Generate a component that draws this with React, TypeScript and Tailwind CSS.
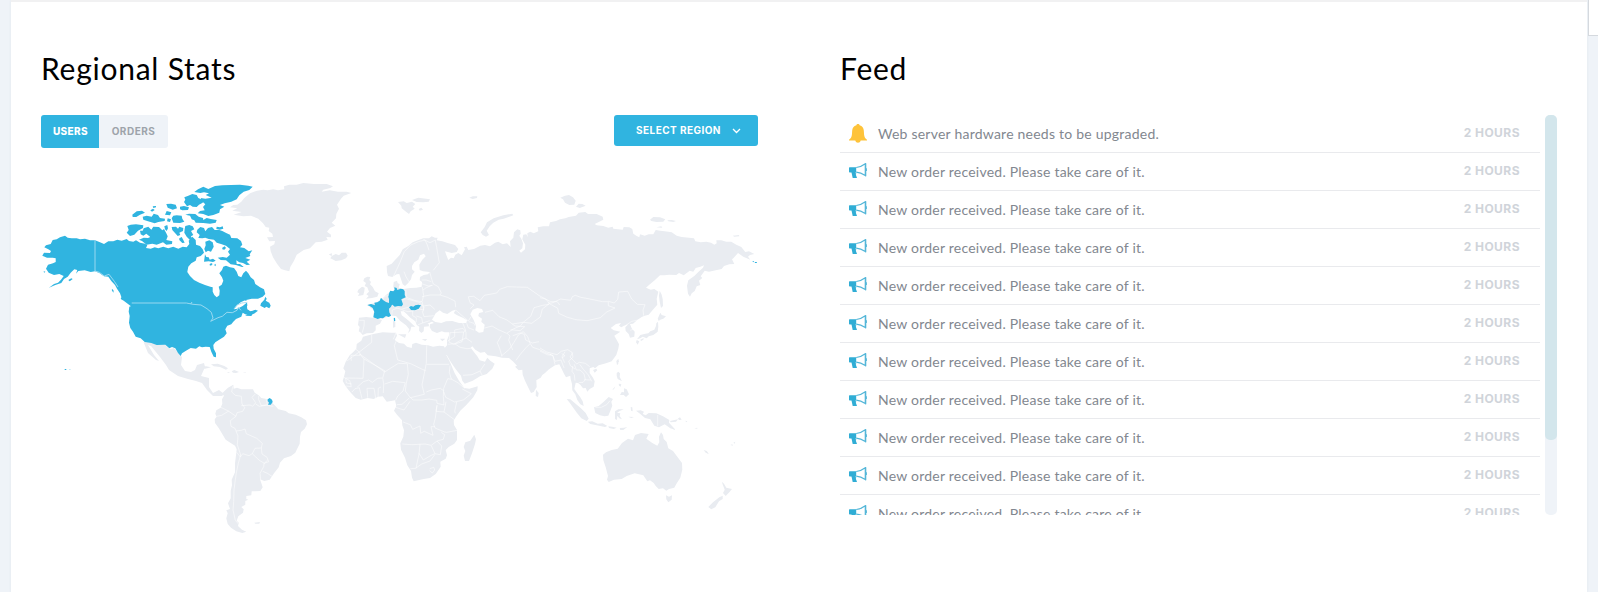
import React from "react";

/* Map sheets: each outline is stored in third-of-a-pixel units, relative to its sheet origin. */
const SHEETS: Record<string, [number, number]> = {
  na: [30, 170],
  gl: [180, 170],
  eu: [340, 180],
  as: [540, 180],
  sa: [200, 360],
  af: [330, 310],
  oc: [540, 340],
};

type Segment = [string, string];

function trace(segments: Segment[], closed: boolean) {
  const pts = segments.flatMap(([sheet, points]) => {
    const [ox, oy] = SHEETS[sheet];
    return points.trim().split(/\s+/).map((p) => {
      const [x, y] = p.split(",").map(Number);
      return `${(ox + x / 3).toFixed(1)} ${(oy + y / 3).toFixed(1)}`;
    });
  });
  return `M${pts.join("L")}${closed ? "Z" : ""}`;
}

const shapes = (sheet: string, list: string[]) => list.map((p) => trace([[sheet, p]], true)).join("");
const lines = (sheet: string, list: string[]) => list.map((p) => trace([[sheet, p]], false)).join("");

const northAmerica = shapes("na", [
  "62,222 68,210 80,208 90,202 105,197 113,203 125,205 140,205 150,208 165,206 180,211 195,211 210,217 222,222 235,214 250,214 262,209 275,212 290,207 297,213 310,215 318,211 330,218 345,221 352,226 348,234 362,236 374,232 385,235 400,230 415,235 430,230 445,236 458,230 470,232 478,222 476,212 487,200 497,210 498,224 510,228 518,238 522,248 512,258 500,262 497,272 484,280 475,290 472,306 480,318 492,330 508,338 525,345 541,350 548,352 548,365 553,375 560,382 568,376 569,362 566,350 575,344 580,332 576,322 568,310 576,300 580,290 588,287 600,292 612,294 620,305 625,318 634,322 640,310 648,302 655,310 662,322 672,330 676,342 690,352 702,358 706,372 698,380 684,386 665,386 645,391 632,397 622,405 612,418 622,416 638,408 650,398 658,401 651,409 652,418 662,424 676,419 684,422 672,431 655,436 646,433 638,428 634,440 618,447 610,455 604,463 592,467 586,478 590,490 582,500 570,508 556,517 550,525 551,536 558,550 558,562 551,560 544,545 539,531 527,530 516,532 508,529 498,536 482,534 468,542 456,550 452,558 444,549 436,535 426,531 418,535 406,524 380,525 364,519 344,516 332,505 317,500 309,485 301,474 297,458 299,438 296,425 298,410 304,408 300,401 285,393 275,384 270,370 261,356 255,345 244,333 235,320 222,319 208,309 195,304 182,306 164,301 145,303 138,311 142,300 133,298 122,308 113,320 102,327 94,339 76,345 57,353 72,342 84,338 93,329 101,318 88,312 72,315 56,308 48,296 54,284 69,280 77,276 77,265 68,263 51,263 37,257 42,248 60,249 63,243 55,238 43,232 48,226",
  "115,330 124,325 128,327 119,334", "40,305 46,304 44,308", "245,360 250,368 251,362 247,357", "274,382 284,388 298,392 306,402 306,411 294,402 281,392 272,387",
  "693,400 703,389 706,380 710,386 707,392 718,398 722,407 718,415 709,410 704,414 691,407", "645,437 657,432 670,430 664,438", "644,390 652,391 647,393",
  "104,597 109,597 109,600 104,600", "117,599 122,599 122,600 117,600",
  "520,50 535,57 555,48 577,46 603,45 630,44 655,47 668,50 658,60 641,65 628,76 620,88 604,95 584,100 570,105 583,110 570,118 568,128 550,135 535,138 520,132 503,130 510,123 524,121 519,111 526,103 516,94 512,84 526,86 545,83 527,75 537,70 522,67 511,69 493,66 504,58",
  "475,77 487,72 500,75 505,84 520,91 518,98 507,104 500,111 488,110 480,105 471,109 462,96 466,89 463,82",
  "520,150 530,144 542,147 560,150 557,158 540,161 520,159 497,158 493,151 485,148 480,137 466,134 477,131 496,132 506,140 519,144",
  "450,110 462,108 477,112 474,120 457,121 450,118", "409,102 423,101 437,104 441,115 428,119 413,113", "440,136 455,137 457,146 463,155 450,159 430,158 425,145 430,137", "410,123 424,127 420,136 405,134", "413,145 423,148 420,156 411,154",
  "338,140 350,137 365,140 371,131 384,135 390,144 405,146 404,153 385,156 374,160 354,154 340,149", "307,134 320,124 336,122 345,128 330,134 319,141 308,141", "361,121 369,116 374,120 366,125", "368,109 378,108 378,112 370,114",
  "292,168 302,164 318,163 329,164 340,166 339,174 324,182 313,194 300,198 290,188 296,180",
  "330,182 338,182 341,175 355,170 364,179 370,170 387,171 397,181 402,177 409,190 413,199 409,210 427,214 426,222 409,224 399,217 380,224 367,221 350,224 336,213 327,209 341,203 354,204 361,201 349,191 340,197 332,193",
  "425,171 438,170 444,176 448,170 460,174 459,183 448,188 451,195 443,198 435,189 427,180", "403,169 412,165 414,175 410,183 405,178", "466,168 478,165 488,169 493,178 483,183 490,195 483,199 486,207 479,209 470,200 463,188 464,177", "448,205 455,201 460,210 464,218 457,219 448,210",
  "502,179 511,171 522,174 526,184 534,174 546,171 554,180 568,180 577,183 590,190 600,194 604,204 622,205 633,213 637,224 630,232 643,234 656,244 667,241 659,253 661,258 646,264 661,269 650,275 660,284 650,285 639,279 628,277 619,271 620,282 630,282 641,291 636,291 618,285 602,283 588,271 572,270 563,263 578,261 590,263 600,254 594,245 600,237 588,227 573,222 560,218 552,209 536,207 526,203 517,205 505,204 509,195 500,187",
  "560,170 570,172 578,169 580,176 569,179 559,177", "526,215 538,211 548,217 551,230 543,245 534,242 527,247 523,237 527,226", "577,233 584,229 588,234 583,239 577,238", "525,253 529,261 536,262 539,269 549,266 557,272 549,276 536,274 522,275", "538,285 543,279 548,282 543,287", "552,285 557,281 557,289",
]);

const highlighted = shapes("eu", [
  "103,368 112,367 119,362 123,353 129,360 138,366 147,369 157,372 153,380 147,386 148,397 153,407 146,411 138,408 129,415 122,414 113,417 100,412 103,396 98,384 89,378 82,375 93,372 105,376",
  "148,338 151,332 160,334 164,329 163,322 170,324 172,330 182,326 190,328 194,334 194,345 197,352 184,358 187,367 189,373 185,379 174,378 164,380 158,375 147,369 147,357 145,350",
  "207,382 213,378 220,380 226,376 235,374 243,376 236,386 225,391 213,390", "161,415 165,413 166,423 162,424",
]) + shapes("sa", ["203,118 209,114 216,119 218,126 212,134 204,134 207,128 203,123"]) + shapes("as", ["637,244 643,243 640,247", "644,246 651,246 650,249 645,249"]);

const eurasia = trace([
  ["eu", "140,258 155,251 165,240 179,225 188,208 205,198 218,187 235,180 250,175 267,175 275,169 285,173 293,173 290,181 307,184 323,189 345,195 355,207 350,216 335,219 315,214 319,225 325,240 333,233 341,235 346,224 355,219 365,226 375,208 372,202 380,200 385,210 402,207 421,197 435,195 450,199 465,188 475,185 488,193 501,190 512,201 510,184 520,173 522,157 532,148 541,151 542,161 538,167 544,176 549,190 547,205 538,212 543,218 555,208 556,194 547,178 550,164 559,163 563,171 562,160 571,155 581,160 595,154 593,142 610,139 627,139 630,127 648,123 660,118"],
  ["as", "76,115 86,111 108,107 116,98 136,96 144,102 170,102 188,110 190,119 178,125 164,132 170,136 190,138 205,143 218,140 220,146 248,149 251,141 268,142 277,147 280,161 290,168 298,172 300,163 314,167 326,163 340,163 347,150 361,152 374,154 395,157 410,167 425,171 462,175 466,184 482,187 499,185 513,188 523,194 530,190 529,181 544,181 559,185 574,185 589,194 604,201 616,216 627,214 643,222 630,225 624,230 631,239 610,230 594,219 588,226 580,235 576,238 583,252 568,253 552,258 545,267 527,271 507,275 494,272 482,289 487,294 477,302 481,315 470,319 464,333 455,340 450,350 444,341 441,317 445,301 463,288 475,276 489,263 492,256 481,260 467,264 460,275 449,272 431,286 417,279 409,285 388,284 373,286 360,286 344,301 327,315 318,323 332,329 343,327 355,335 350,356 352,374 338,390 326,404 314,407 305,411 292,420 279,431 270,432 275,445 284,455 283,470 270,473 266,462 257,453 256,442 265,433 252,437 244,442 237,437 243,429 228,432 212,444 221,451 241,455 223,467 232,483 237,493 235,506 229,525 215,544 198,550 176,556 165,565"],
  ["oc", "160,81 149,85 149,99 159,113 164,124 161,140 149,147 142,155 137,144 129,145 121,134 114,129 107,128 103,147 112,160 121,172 128,184 131,198 121,193 112,180 106,163 97,151 96,132 92,118 91,107 78,112 72,101 65,87 58,73 45,76"],
  ["af", "657,178 645,189 637,195 632,203 619,211 620,231 611,246 603,249 594,231 585,212 578,194 577,179 566,181 555,170 561,167 550,155 537,144 516,143 497,139 473,136 464,126 451,128 436,119 427,109 422,113 434,129 442,139 449,151 465,155 472,143 481,152 494,161 487,176 470,192 450,199 428,212 404,221 397,212 393,197 379,180 369,166 359,151 346,127 342,116 351,106 351,91 357,76 358,67 344,67 335,64 321,69 306,63 299,52 300,43 311,36"],
  ["eu", "275,430 266,432 267,439 252,440 251,454 244,459 237,452 238,440 230,435 226,424 211,413 200,402 191,394 182,394 185,406 199,416 207,423 219,434 226,440 214,440 211,452 204,460 208,448 198,436 180,422 168,408 153,407 126,416 102,412 100,400 104,393 82,375 103,369 120,362 135,347 149,336 164,331 160,320 161,306 171,302 173,310 179,312 176,323 190,327 211,324 229,323 245,320 246,306 239,301 240,291 251,285 264,283 269,276 249,274 239,270 238,254 247,239 257,229 252,221 240,226 235,239 223,247 216,258 216,268 224,275 216,285 213,298 204,310 195,318 188,313 184,300 178,282 170,283 157,291 144,288 141,276"],
], true);

const land =
  eurasia +
  shapes("gl", ["150,112 160,105 172,104 184,95 193,84 210,70 231,62 250,59 263,61 280,58 294,61 313,58 312,49 328,44 350,44 370,39 402,42 440,42 459,49 451,54 430,59 425,65 449,61 474,65 500,65 514,69 491,77 483,86 471,104 477,116 469,132 468,145 455,158 466,167 450,174 441,185 453,194 453,202 439,201 443,209 425,215 407,217 390,235 371,240 350,254 342,272 331,291 328,304 315,301 303,297 291,281 279,262 272,244 270,230 283,223 285,213 268,214 261,202 279,201 277,191 266,183 268,173 257,171 249,160 235,146 213,137 190,139 161,134 185,126 157,122 172,115", "446,253 456,250 455,258 467,252 477,256 485,248 498,248 503,257 498,265 484,271 467,273 456,267 451,265 455,259"]) +
  shapes("eu", ["57,413 79,411 104,414 126,420 120,431 107,437 107,451 99,459 80,460 68,465 61,457 56,454 59,441 54,435", "73,295 82,290 91,291 88,300 93,306 90,313 98,321 105,334 116,340 112,350 96,354 78,356 86,348 79,343 87,335 82,322 74,318 78,309 70,303", "55,329 66,320 74,323 73,334 70,345 54,348 58,340 52,337", "174,66 191,64 200,69 216,65 226,72 218,80 224,86 212,94 207,102 198,95 185,85 184,77", "216,60 235,53 270,58 266,65 250,67 230,66", "236,87 244,83 249,89 239,92", "388,53 398,49 412,49 411,54 398,57", "422,157 434,141 441,127 461,115 490,106 517,101 520,106 491,116 476,119 460,128 449,139 440,152 447,165 438,170 428,165", "174,463 199,463 195,474", "159,423 166,426 166,441 159,443", "245,478 262,477 256,483", "300,476 316,476 307,484"]) +
  shapes("as", ["61,53 75,47 87,45 99,52 107,62 103,74 88,75 75,68 69,58", "108,80 116,71 127,72 137,77 119,84", "330,119 340,111 360,112 376,118 370,125 349,126 334,123", "382,121 395,120 408,123 400,126 385,124", "349,142 364,139 367,143", "578,167 597,165 598,169 583,170", "359,332 365,344 368,358 369,378 363,384 359,365 357,347", "353,416 361,398 365,405 378,409 370,416 361,419 356,423", "354,425 355,440 353,455 340,465 326,469 320,475 308,470 301,475 291,478 301,465 316,461 325,460 331,454 343,449 348,438 349,430", "290,480 298,484 293,494 288,487", "301,479 311,474 310,479 303,483", "229,543 235,537 235,551 231,556"]) +
  shapes("af", ["99,80 116,76 134,71 158,67 185,68 198,68 201,77 194,90 207,99 222,101 231,110 245,114 247,102 258,98 275,104 294,106 309,110 328,107 342,109 350,125 349,135 361,158 374,190 387,212 403,234 418,236 443,229 442,241 430,262 409,285 391,302 378,320 371,332 372,345 381,360 381,390 373,401 356,411 347,420 351,436 347,446 331,455 332,470 317,492 300,504 281,507 251,514 246,503 243,483 232,466 225,443 213,419 211,400 220,380 222,361 217,346 216,331 201,314 192,302 199,288 195,271 183,273 170,275 158,259 144,260 131,267 113,264 92,269 77,264 65,251 55,239 47,229 38,213 42,200 46,184 40,175 47,155 59,136 70,126 79,116 80,102 94,92", "433,374 438,388 435,402 426,430 417,453 405,453 401,437 406,423 401,411 406,397 421,392", "618,239 626,249 624,261 617,258"]) +
  shapes("sa", ["65,101 76,91 84,83 100,74 101,86 111,83 124,88 145,88 159,88 164,98 176,106 184,114 200,117 210,120 218,130 227,139 235,148 257,153 266,160 287,164 304,172 318,181 321,193 314,206 303,216 300,230 299,251 290,269 286,278 273,288 252,295 240,308 236,322 222,340 209,359 193,363 180,358 184,369 188,382 181,393 165,394 155,394 154,406 139,408 139,417 145,419 136,423 136,434 124,441 131,448 129,458 115,469 110,482 117,489 114,498 126,509 139,515 127,519 109,514 93,503 83,492 79,475 83,460 79,451 90,447 84,430 92,415 92,392 96,376 95,359 105,337 105,310 107,293 110,268 105,257 91,248 77,239 69,226 56,204 45,189 44,178 50,170 46,161 49,151 62,143 67,131 66,118 72,107", "163,488 180,486 178,491 166,491", "33,13 53,11 73,18 84,25 78,29 60,21 41,19", "0,21 18,19 33,22 15,26", "95,34 103,30 117,36 108,39 99,38", "80,36 90,37 86,39", "128,37 137,37 137,39"]) +
  "M143.5 342 L154 343 L159 345 L165 345 L170 349 L174 348 L180 355 L182 357 L181 365 L185 371 L191 372 L195 370 L197 365 L204 363 L205 367 L201 376 L209 378 L209 387 L213 393 L219 390 L224 394 L222 396 L213 396 L207 390 L202 383 L196 381 L188 379 L178 376 L169 370 L166 365 L160 357 L151 346 L148 345 L154 355 L159 361 L156 360 L148 353 Z" +
  shapes("oc", ["80,177 91,178 105,190 122,204 137,219 146,236 140,243 124,235 111,219 98,201 89,188", "143,245 157,244 173,251 188,250 202,258 195,261 170,256 151,252", "205,259 216,260 230,263 221,267 207,264", "239,264 252,263 262,261 250,270 241,270", "162,202 176,198 191,185 206,171 219,177 214,185 217,197 211,213 205,227 193,229 180,226 166,219", "225,214 235,208 251,208 238,214 231,218 241,220 239,228 246,238 238,235 232,227 231,240 225,237 225,223", "230,99 235,95 240,100 239,111 246,124 233,117 230,108", "252,145 260,148 267,163 258,171 251,165 240,165 245,156 252,157", "236,131 244,132 242,140 237,137", "217,149 226,139 222,148", "159,90 169,86 172,91 164,98", "229,64 235,56 237,65 232,71", "272,201 277,202 278,214 273,212", "288,212 302,211 312,215 308,222 317,226 326,219 349,220 369,229 388,240 387,248 407,270 391,265 374,253 357,262 343,257 331,238 315,234 300,221", "390,243 414,238 408,245 392,247", "413,236 420,232 425,239 418,240", "265,230 282,231 274,234",
    "189,344 198,337 215,330 233,326 246,309 264,296 279,301 285,285 303,279 326,282 319,296 337,309 352,317 358,307 357,290 363,277 369,285 371,297 380,306 385,325 399,333 412,350 426,369 427,389 421,413 409,432 403,443 387,447 379,452 369,445 356,447 347,438 341,429 330,421 322,424 310,406 284,400 260,408 245,417 222,419 206,426 201,419 204,408 197,382 190,360", "378,466 387,470 396,466 395,479 385,487 379,478", "545,425 552,431 559,443 576,447 568,457 557,468 549,459 554,449", "548,467 548,477 537,484 526,502 514,508 505,501 519,487 538,472", "491,330 500,333 507,342 497,338", "571,315 577,313 579,317", "580,308 586,305 584,311", "435,242 442,244 440,247", "463,265 472,263 472,266"]);

const water = shapes("eu", [
  "276,419 287,400 299,391 309,398 322,402 337,392 348,389 341,399 350,405 370,414 381,421 379,429 357,429 337,423 318,424 304,429 286,426",
  "391,403 398,389 412,384 426,387 430,396 417,399 415,408 426,416 424,425 434,434 430,456 417,458 406,451 408,438 401,420", "262,431 276,425 282,429 270,433",
]);

const borders =
  lines("eu", [
    "160,290 172,265 180,247 193,215 212,195 235,185 255,180 262,195 267,211", "250,178 270,188 286,180 290,203 298,248 280,271", "210,310 198,290 192,275", "269,276 275,298 280,312 295,320 304,339 300,345 322,352 345,363 347,382",
    "245,300 259,300 274,305", "245,311 265,318 278,316", "249,330 259,323 275,316", "197,330 199,352 223,361 246,365 251,347 247,321", "246,350 270,345 300,345", "246,365 250,378 270,375 284,388", "187,360 198,356 223,363 242,368", "167,383 184,388 207,381", "155,408 157,390 170,385", "187,390 204,395 218,393 238,387 251,390 249,378", "218,393 218,407 229,413 229,427", "229,408 245,413 248,429 234,434", "247,394 252,410 281,407", "248,429 269,422", "242,370 252,382 249,395", "148,369 158,375 164,380", "127,361 134,349 149,346", "58,421 73,421 72,438 67,458",
    "348,391 370,410 385,423 393,410", "387,425 402,430 405,437", "380,430 385,443 402,450", "368,429 377,451 371,456 330,458", "330,458 327,486 341,493 366,485 371,456", "385,350 401,349 420,362 433,346 470,339 479,328 502,320 529,321 562,322 598,347 632,365 652,365 659,375",
    "385,350 390,368 402,375 391,386", "435,397 458,391 477,410 501,420 517,432 550,427 572,409 582,383 608,376 628,373", "431,445 456,438 475,449 500,460 520,447 541,438 550,427", "517,432 525,438 554,440 540,452 512,449", "550,427 575,430 601,411 607,387 628,371", "501,460 510,468 506,480 518,510", "518,467 541,459 553,463 557,480 577,489 597,485",
  ]) +
  lines("as", ["0,353 17,357 30,372 53,385 56,400 82,412 108,419 141,422 181,413 200,396 225,384 205,377 205,365 188,365 145,356 122,352 106,346 97,350 92,361 62,357 36,369 23,369", "205,364 223,369 233,358 236,336 263,334 275,357 292,373 315,374 309,390 311,407", "271,451 281,447", "256,437 275,424 296,420", "0,504 20,516 51,524 64,514 83,509 96,517 99,532 86,543 91,557 105,567", "0,513 22,524 38,526 45,544 63,540 72,564", "65,521 75,527 66,534"]) +
  lines("af", ["200,90 193,107 199,133 203,150 242,161 277,178 287,182", "198,68 190,88", "125,75 125,97 89,125 50,153", "89,132 102,147 99,205 47,204 49,219 65,222", "89,132 164,186 205,160 232,161 235,193 229,220 226,243 241,263 283,253 276,225 289,160 290,106", "290,163 357,163", "360,167 358,187 364,207 385,219 404,235", "102,147 164,182 158,204 161,222 160,249", "78,118 90,128 90,136 63,136 64,152", "164,222 188,214 226,218 219,243 203,258 197,271", "241,262 249,270 275,270 297,267 320,271 321,280 342,285 340,259 341,235 353,206 365,208", "289,246 304,240 331,235 341,242", "341,245 347,262 374,276 400,270 424,251 397,237", "380,276 374,303 376,310", "348,275 342,306 376,331", "318,304 342,306", "318,304 321,286 316,324 311,343 315,354 344,366 350,367 382,361", "200,284 216,283 238,264", "196,292 222,300 230,289 240,274", "219,336 241,344 248,358 270,348 272,370 283,364 309,376 303,350 315,350", "217,402 245,404 285,402 304,406 321,393 340,388 344,374 334,367", "270,402 267,432 258,475 241,476", "267,430 280,450 304,436 315,431 304,407", "315,431 331,434 335,408 321,393", "258,474 275,462 300,453 314,434", "299,476 311,472 314,480 307,489 299,482", "353,103 374,101 390,92 408,84 426,97", "374,101 390,112 411,116 423,115", "399,196 426,194 450,183 457,197", "451,182 464,162", "408,84 408,66 399,55 374,60 374,80 353,93", "516,139 509,116 502,98 514,77", "514,138 538,118 552,97 565,75 580,65 593,80 600,100 608,112 629,119 650,130 664,134", "558,151 571,133 588,113 600,101", "660,133 669,137 675,164", "42,202 59,212 64,230 47,228", "66,246 75,236 88,233 96,266", "82,231 100,215 116,210 127,217 143,205 156,204", "113,263 111,235 132,235 137,265", "144,261 145,235 153,231"]) +
  lines("sa", ["98,79 95,96 106,106 124,109 126,132 134,143 128,154 111,158 108,169 91,182 93,199 105,205 108,213 124,211 135,207 139,221 170,235 187,250 184,264 165,265 157,281 147,287 128,281 121,291 110,277", "124,137 150,135 158,139 167,128 156,112 166,102", "167,132 178,139 199,136 220,139", "176,107 176,119 184,137 202,134 198,116", "62,142 85,153 108,169", "50,169 65,166 86,153", "108,213 114,228 112,254 122,285 115,310 109,339 106,360 102,390 101,425 99,450 106,481 121,498", "184,263 186,282 201,292 206,305 192,310 191,320 180,340 182,359", "157,281 178,301 193,310 203,300", "188,334 202,340 216,349"]) +
  lines("oc", ["353,225 353,258", "75,35 66,51 74,68", "98,38 90,51 100,61 110,72 118,67 136,70 149,80", "103,73 109,90 120,90 132,101 136,119 129,127 116,128", "132,119 152,120", "119,73 130,88 145,105 155,124", "98,78 96,94 103,104 105,122", "166,202 184,202 200,194 210,182"]);

const usBorders = lines("na", ["195,211 195,303 208,307 223,318 237,313 253,334 264,351", "305,399 469,399 489,403 513,405 531,416 544,427 549,444 542,454 564,443 577,439 591,427 607,428 621,421 625,412 633,421", "482,402 486,396", "612,417 620,406 635,399 653,397"]);

function WorldMap() {
  return (
    <svg className="mt-[22px] block h-[370px] w-[740px] shrink-0 -ml-[11px]" viewBox="30 170 740 370" role="img" aria-label="Users by country">
      <path d={land} fill="#e9ecf1" />
      <path d={borders} fill="none" stroke="#ffffff" strokeOpacity=".8" strokeWidth=".65" strokeLinejoin="round" />
      <path d={water} fill="#ffffff" />
      <path d={northAmerica + highlighted} fill="#30b4e0" />
      <path d={usBorders} fill="none" stroke="#a4ddf2" strokeWidth=".9" strokeLinejoin="round" />
      <path d={shapes("na", ["651,398 663,390 674,390 684,393 680,407 674,419 660,423 653,414"])} fill="#ffffff" />
    </svg>
  );
}

function BellIcon() {
  return (
    <svg className="h-[19px] w-[18px] shrink-0" viewBox="0 0 18 19" fill="#fec33a">
      <path d="M9 0C8.1 0 7.5.5 7.4 1.3 4.7 2 3.4 4 3.2 6.5L2.9 10.7C2.7 13 1.7 14.5 0 15.8V16.6H6.3C6.7 18 7.7 18.8 9 18.8S11.3 18 11.7 16.6H18V15.8C16.3 14.5 15.3 13 15.1 10.7L14.8 6.5C14.6 4 13.3 2 10.6 1.3 10.5.5 9.9 0 9 0Z" />
    </svg>
  );
}

function MegaphoneIcon() {
  return (
    <svg className="mb-[2px] h-[16px] w-[18px] shrink-0" viewBox="0 0 18 16" fill="none">
      <path d="M0 4.8Q0 4.2.7 4.2H7.2V9.4H6.5V10.3H7.2V11L6.8 11.6 8 14.9H3.7L2.5 9.4H.7Q0 9.4 0 8.7Z" fill="#30add5" />
      <path d="M7.2 4.5C10.8 4.3 13.6 2.7 16.3.7V12.4C13.6 10.6 10.8 9.3 7.2 9.1" stroke="#53b6d8" strokeWidth="1.2" />
      <path d="M16.7.2V13.2M17.3 5.2V8" stroke="#53b6d8" strokeWidth="1.2" />
    </svg>
  );
}

const feed = [
  { kind: "alert", text: "Web server hardware needs to be upgraded." },
  ...Array.from({ length: 10 }, () => ({ kind: "order", text: "New order received. Please take care of it." })),
];

function FeedList() {
  return (
    <div className="flex h-[400px] overflow-hidden">
      <ul className="w-[700px]">
        {feed.map((item, i) => (
          <li key={i} className="flex h-[38px] items-center border-b border-[#e9eaed] pl-[9px] pr-[20px]">
            {item.kind === "alert" ? <BellIcon /> : <MegaphoneIcon />}
            <span className="ml-[11px] text-[14px] leading-5 tracking-[0.23px] text-[#82878f]">{item.text}</span>
            <span className="ml-auto pb-[2px] font-['Inter',sans-serif] text-[12px] leading-5 font-bold tracking-[0.45px] text-[#d0d4da]">2 HOURS</span>
          </li>
        ))}
      </ul>
      <div className="ml-[5px] h-[400px] w-3 rounded-[5px] bg-[#eff3f8]">
        <div className="h-[325px] rounded-[5px] bg-[#d3e6ec]" />
      </div>
    </div>
  );
}

export default function App() {
  return (
    <div className="flex h-[592px] w-[1598px] overflow-hidden bg-[#eff3f8] pl-[11px] font-['Lato',sans-serif]">
      <main className="flex w-[1576px] shrink-0 border-t-2 border-[#f1f1f2] bg-white pl-[30px] shadow-[0_0_3px_rgba(60,80,100,0.07)]">
        <section className="w-[799px] shrink-0">
          <h2 className="mt-[45px] h-[68px] text-[30px] leading-[42px] tracking-[0.75px] text-black">Regional Stats</h2>
          <div className="flex h-[33px] w-[717px] items-start justify-between font-['Inter',sans-serif] text-[10px] font-bold">
            <div className="flex h-[33px] overflow-hidden rounded-[3px]">
              <button className="w-[58px] bg-[#30b4e0] pl-px font-extrabold tracking-[0.4px] text-white">USERS</button>
              <button className="w-[69px] bg-[#eff3f8] tracking-[0.5px] text-[#9da3aa]">ORDERS</button>
            </div>
            <button className="flex h-[31px] w-[144px] items-center rounded-[3px] bg-[#30b4e0] pl-[22px] text-white">
              <span className="tracking-[0.45px]">SELECT REGION</span>
              <svg className="ml-auto mr-[17px] h-[6px] w-[9px]" viewBox="0 0 9 6" fill="none" stroke="currentColor" strokeWidth="1.3">
                <path d="M1 1L4.5 4.5 8 1" />
              </svg>
            </button>
          </div>
          <WorldMap />
        </section>
        <section className="w-[717px]">
          <h2 className="mt-[45px] h-[68px] text-[30px] leading-[42px] tracking-[0.75px] text-black">Feed</h2>
          <FeedList />
        </section>
      </main>
      <aside className="ml-px h-[36px] w-[10px] shrink-0 border-b border-l border-[#d5d9de] bg-white" />
    </div>
  );
}
